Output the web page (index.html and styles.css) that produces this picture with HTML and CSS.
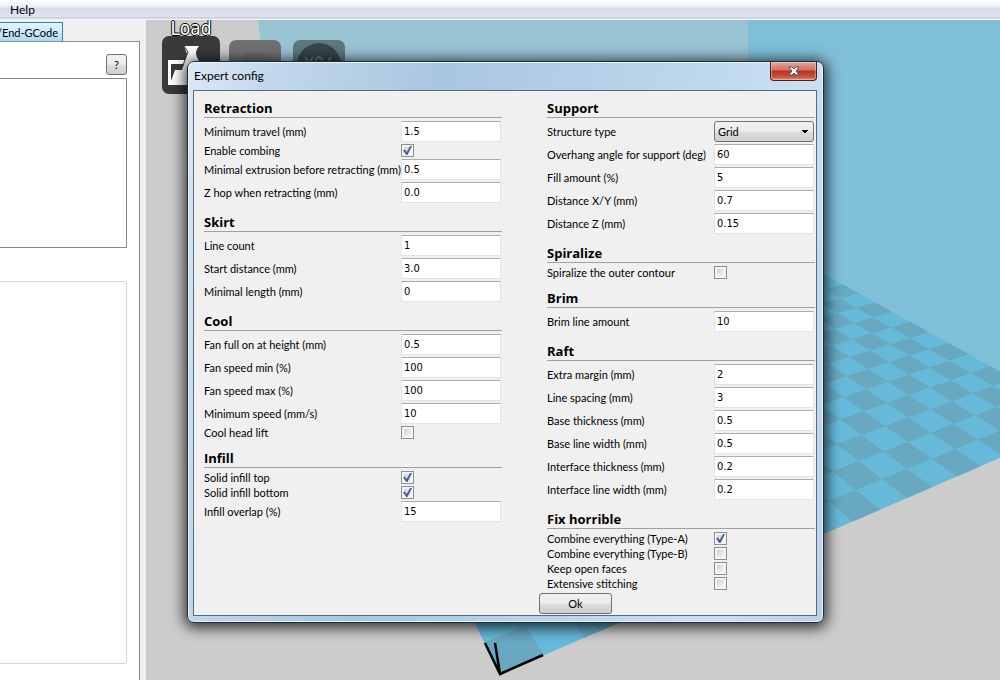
FILE: index.html
```html
<!DOCTYPE html>
<html lang="en">
<head>
<meta charset="utf-8">
<meta name="viewport" content="width=device-width, initial-scale=1">
<title>Expert config</title>
<link rel="stylesheet" href="styles.css">
</head>
<body>
<div class="app">
  <nav class="menubar"><button type="button" class="menu-item">Help</button></nav>
  <div class="workspace">
    <aside class="sidebar">
      <div class="tabs"><button type="button" class="tab">t/End-GCode</button></div>
      <div class="tab-page">
        <div class="tab-tools"><button type="button" class="help">?</button></div>
        <div class="list"></div>
        <div class="group"></div>
      </div>
    </aside>
    <main class="viewport">
      <svg class="scene" viewBox="146 20 854 660" preserveAspectRatio="xMinYMin slice" aria-hidden="true">
        <rect x="146" y="20" width="854" height="660" fill="#cccccc"/>
        <path d="M258 20H748V240L480 120L268 110Z" fill="#99c3d3"/>
        <path d="M748 20H1000V380L748 240Z" fill="#80bfd8"/>
        <g id="bed"></g>
        <path d="M485 643L500 674L543 655M495 643L500 674" fill="none" stroke="#000" stroke-width="2.5"/>
      </svg>
      <div class="toolbar">
        <button type="button" class="tool tool-load"><span class="tool-label">Load</span>
          <svg viewBox="0 0 58 58" aria-hidden="true"><rect width="58" height="58" rx="7" fill="#3a3a3a"/><path d="M6 24H25V34H54V49H6Z" fill="#fff"/><path d="M9 45V28H25L22 34H13Z" fill="#3a3a3a"/><path d="M22 10H37C33 16 33 18 37 25H52V34H20L25 18Z" fill="#fff"/><path d="M22 10L26 16L20 32" fill="none" stroke="#3a3a3a" stroke-width="1"/></svg>
        </button>
        <button type="button" class="tool tool-dim" aria-label="Save"><svg viewBox="0 0 52 52" aria-hidden="true"><rect width="52" height="52" rx="7" fill="#707272"/><path d="M12 11H38V30H12Z" fill="#6e6c6c" stroke="#7c7878" stroke-width="1"/></svg></button>
        <button type="button" class="tool tool-dim" aria-label="View"><svg viewBox="0 0 52 52" aria-hidden="true"><rect width="52" height="52" rx="7" fill="#5c7980"/><circle cx="26" cy="25" r="22" fill="#35474d"/><path d="M12 17L17 24M20 17L15 24M23 22V19L26 17L29 19V22M38 17L34 23" fill="none" stroke="#5c7980" stroke-width="2"/></svg></button>
      </div>
    </main>
  </div>
</div>

<section class="dialog" role="dialog" aria-labelledby="dialog-title">
  <header class="titlebar">
    <h1 id="dialog-title">Expert config</h1>
    <button type="button" class="close" aria-label="Close"><svg viewBox="0 0 14 12" aria-hidden="true"><path d="M2 2H5L7 4L9 2H12L9 6L12 10H9L7 8L5 10H2L5 6Z" fill="#fff" stroke="#4d5560" stroke-width="1"/></svg></button>
  </header>
  <form class="panel">
    <div class="columns">
      <div class="column">
        <fieldset><legend>Retraction</legend>
          <div class="row"><label for="f1">Minimum travel (mm)</label><input type="text" id="f1" value="1.5"></div>
          <div class="row check"><label for="f2">Enable combing</label><input type="checkbox" id="f2" checked></div>
          <div class="row"><label for="f3">Minimal extrusion before retracting (mm)</label><input type="text" id="f3" value="0.5"></div>
          <div class="row"><label for="f4">Z hop when retracting (mm)</label><input type="text" id="f4" value="0.0"></div>
        </fieldset>
        <fieldset><legend>Skirt</legend>
          <div class="row"><label for="f5">Line count</label><input type="text" id="f5" value="1"></div>
          <div class="row"><label for="f6">Start distance (mm)</label><input type="text" id="f6" value="3.0"></div>
          <div class="row"><label for="f7">Minimal length (mm)</label><input type="text" id="f7" value="0"></div>
        </fieldset>
        <fieldset><legend>Cool</legend>
          <div class="row"><label for="f8">Fan full on at height (mm)</label><input type="text" id="f8" value="0.5"></div>
          <div class="row"><label for="f9">Fan speed min (%)</label><input type="text" id="f9" value="100"></div>
          <div class="row"><label for="f10">Fan speed max (%)</label><input type="text" id="f10" value="100"></div>
          <div class="row"><label for="f11">Minimum speed (mm/s)</label><input type="text" id="f11" value="10"></div>
          <div class="row check"><label for="f12">Cool head lift</label><input type="checkbox" id="f12"></div>
        </fieldset>
        <fieldset><legend>Infill</legend>
          <div class="row check"><label for="f13">Solid infill top</label><input type="checkbox" id="f13" checked></div>
          <div class="row check"><label for="f14">Solid infill bottom</label><input type="checkbox" id="f14" checked></div>
          <div class="row"><label for="f15">Infill overlap (%)</label><input type="text" id="f15" value="15"></div>
        </fieldset>
      </div>
      <div class="column">
        <fieldset><legend>Support</legend>
          <div class="row"><label for="g1">Structure type</label><select id="g1"><option>Grid</option></select></div>
          <div class="row"><label for="g2">Overhang angle for support (deg)</label><input type="text" id="g2" value="60"></div>
          <div class="row"><label for="g3">Fill amount (%)</label><input type="text" id="g3" value="5"></div>
          <div class="row"><label for="g4">Distance X/Y (mm)</label><input type="text" id="g4" value="0.7"></div>
          <div class="row"><label for="g5">Distance Z (mm)</label><input type="text" id="g5" value="0.15"></div>
        </fieldset>
        <fieldset><legend>Spiralize</legend>
          <div class="row check"><label for="g6">Spiralize the outer contour</label><input type="checkbox" id="g6"></div>
        </fieldset>
        <fieldset><legend>Brim</legend>
          <div class="row"><label for="g7">Brim line amount</label><input type="text" id="g7" value="10"></div>
        </fieldset>
        <fieldset><legend>Raft</legend>
          <div class="row"><label for="g8">Extra margin (mm)</label><input type="text" id="g8" value="2"></div>
          <div class="row"><label for="g9">Line spacing (mm)</label><input type="text" id="g9" value="3"></div>
          <div class="row"><label for="g10">Base thickness (mm)</label><input type="text" id="g10" value="0.5"></div>
          <div class="row"><label for="g11">Base line width (mm)</label><input type="text" id="g11" value="0.5"></div>
          <div class="row"><label for="g12">Interface thickness (mm)</label><input type="text" id="g12" value="0.2"></div>
          <div class="row"><label for="g13">Interface line width (mm)</label><input type="text" id="g13" value="0.2"></div>
        </fieldset>
        <fieldset><legend>Fix horrible</legend>
          <div class="row check"><label for="g14">Combine everything (Type-A)</label><input type="checkbox" id="g14" checked></div>
          <div class="row check"><label for="g15">Combine everything (Type-B)</label><input type="checkbox" id="g15"></div>
          <div class="row check"><label for="g16">Keep open faces</label><input type="checkbox" id="g16"></div>
          <div class="row check"><label for="g17">Extensive stitching</label><input type="checkbox" id="g17"></div>
        </fieldset>
      </div>
    </div>
    <footer class="actions"><button type="button" class="ok">Ok</button></footer>
  </form>
</section>
<script src="bed.js"></script>
</body>
</html>
```
FILE: styles.css
```css
* { box-sizing: border-box; }
body {
  margin: 0;
  font: 11px/15px Lato, "Liberation Sans", sans-serif;
  color: #000;
  background: #f0f0f0;
}
button, input, select { font: inherit; color: inherit; margin: 0; }
.app { display: flex; flex-direction: column; height: 100vh; min-height: 640px; overflow: hidden; }
.menubar {
  flex: none;
  height: 20px;
  background: linear-gradient(#fff 0, #e9ecf5 7px, #d6dcec 8px, #e0e3f3 17px, #b6bccc 18px, #f6f6f6 19px);
}
.menu-item { border: 0; background: none; padding: 2px 10px; font-size: 12px; }
.workspace { flex: 1; display: grid; grid-template-columns: 146px 1fr; min-height: 0; }
.sidebar { display: flex; flex-direction: column; padding-right: 6px; background: #f0f0f0; }
.tabs { display: flex; height: 21px; padding-top: 2px; }
.tab {
  width: 63px;
  padding: 0 4px 0 0;
  border: 1px solid #3c7fb1;
  border-width: 1px 1px 0 0;
  background: linear-gradient(#e3f4fc, #cdeafa 50%, #a8daf3);
  display: flex;
  align-items: center;
  justify-content: flex-end;
  white-space: nowrap;
  overflow: hidden;
}
.tab-page {
  flex: 1;
  display: flex;
  flex-direction: column;
  padding: 12px 12px 16px 0;
  border: 1px solid #898c95;
  border-width: 1px 1px 0 0;
  background: #fff;
}
.tab-tools { display: flex; justify-content: flex-end; height: 24px; }
.help {
  width: 21px;
  height: 21px;
  padding: 0;
  border: 1px solid #707070;
  border-radius: 3px;
  background: linear-gradient(#f2f2f2, #ebebeb 50%, #ddd 51%, #cfcfcf);
}
.list { height: 170px; border: 1px solid #828790; border-width: 1px 1px 1px 0; }
.group { flex: 1; margin-top: 33px; border: 1px solid #d5d7d9; border-left: 0; border-radius: 0 3px 3px 0; }
.viewport { display: grid; min-width: 0; overflow: hidden; background: #ccc; }
.scene, .toolbar { grid-area: 1 / 1; }
.scene { width: 100%; height: 100%; }
.toolbar { display: flex; align-items: flex-start; gap: 12px; padding-left: 16px; z-index: 1; }
.tool { flex: none; border: 0; padding: 0; background: none; display: block; }
.tool svg { display: block; width: 100%; }
.tool-load { width: 58px; }
.tool-load + .tool-dim { margin-left: -3px; }
.tool-dim { width: 52px; padding-top: 20px; }
.tool-label {
  display: block;
  height: 16px;
  font: 19px/16px "DejaVu Sans Condensed", "DejaVu Sans", sans-serif;
  color: #fff;
  text-shadow: 1px 0 #000, -1px 0 #000, 0 1px #000, 0 -1px #000;
}
.dialog {
  position: absolute;
  left: 187px;
  top: 61px;
  width: 637px;
  padding: 0 6px 6px 5px;
  border: 1px solid #1d2b3a;
  border-radius: 7px;
  background: linear-gradient(100deg, #dbe8f5 0, #c2d7ec 12%, #a9c6e0 35%, #b8d2ea 60%, #c9dff3 85%, #b9d0e6);
  box-shadow: inset 0 0 0 1px #e8f3fb, 0 2px 14px 3px rgba(0, 0, 0, .75);
  z-index: 2;
}
.titlebar { display: flex; align-items: flex-start; justify-content: space-between; height: 28px; }
.titlebar h1 { margin: 0; padding: 6px 1px; font-size: 12px; line-height: 16px; font-weight: 400; }
.close {
  width: 47px;
  height: 19px;
  padding: 0;
  border: 1px solid #4b1f22;
  border-top: 0;
  border-radius: 0 0 4px 4px;
  background: linear-gradient(#e3a598, #d3705f 45%, #b92f20 50%, #c8503a 80%, #e08a6a);
  box-shadow: inset 0 0 0 1px rgba(255, 255, 255, .35);
  display: grid;
  place-items: center;
}
.close svg { width: 14px; height: 12px; }
.panel { border: 1px solid #566b82; background: #f0f0f0; padding: 7px 1px 1px 10px; }
.columns { display: grid; grid-template-columns: minmax(0, 298fr) minmax(0, 268fr); gap: 45px; }
fieldset { display: block; min-width: 0; margin: 0 0 8px; padding: 0; border: 0; }
fieldset:last-child { margin-bottom: 0; }
legend {
  display: block;
  width: 100%;
  height: 20px;
  margin-bottom: 2px;
  padding: 0;
  border-bottom: 1px solid #a0a0a0;
  font: 700 13px/20px "Open Sans", "Noto Sans", sans-serif;
}
.row { display: grid; grid-template-columns: minmax(0, 1fr) 101px; align-items: center; height: 23px; }
.row.check { height: 15px; }
.row label { white-space: nowrap; }
.row input[type="text"] {
  width: 100px;
  height: 21px;
  padding: 0 2px;
  border: 1px solid #e2e3ea;
  border-top-color: #abadb3;
  border-radius: 1px;
  background: #fff;
  font-family: "DejaVu Sans Condensed", "DejaVu Sans", sans-serif;
}
.row select {
  appearance: none;
  width: 100px;
  height: 21px;
  padding: 0 3px;
  border: 1px solid #707070;
  border-radius: 3px;
  background:
    linear-gradient(to top right, transparent 50%, #000 50%) 86px 8px / 4px 4px no-repeat,
    linear-gradient(to top left, transparent 50%, #000 50%) 90px 8px / 4px 4px no-repeat,
    linear-gradient(#f2f2f2, #ebebeb 50%, #ddd 51%, #cfcfcf);
}
.row input[type="checkbox"] {
  appearance: none;
  width: 13px;
  height: 13px;
  border: 1px solid #8e8f8f;
  background: linear-gradient(135deg, #cfd2d6, #f6f6f6) center / 7px 7px no-repeat, #f4f4f4;
  display: grid;
  place-items: center;
}
.row input[type="checkbox"]:checked::before {
  content: "";
  width: 9px;
  height: 9px;
  background: #4a5f97;
  clip-path: polygon(0 48%, 22% 38%, 40% 66%, 78% 0, 100% 0, 50% 100%, 36% 100%);
}
.actions { display: flex; padding: 2px 0 0 335px; }
.ok {
  width: 73px;
  height: 21px;
  padding: 0;
  border: 1px solid #707070;
  border-radius: 3px;
  background: linear-gradient(#f2f2f2, #ebebeb 50%, #ddd 51%, #cfcfcf);
}
```
FILE: bed.js
```js
// Perspective checkerboard of the print bed. Each anchor is [row, column, x, y].
const anchors = [
  [1, -13, 500, 674], [0, -13, 485, 643], [1, -12, 543, 655],
  [1, 0, 932, 488], [0, 0, 907, 469], [1, 2, 980, 465],
  [-3, 3, 909, 395], [-7, 7, 909, 321], [-11, 7, 843, 285],
  [-3, 7, 991, 367], [-2, -1, 838, 444]
];

// Least-squares fit of the eight coefficients of the projection.
function fit(points) {
  const rows = [];
  for (const [u, v, px, py] of points) {
    const x = px / 1000, y = py / 1000, a = u / 10, b = v / 10;
    rows.push([a, b, 1, 0, 0, 0, -a * x, -b * x, x]);
    rows.push([0, 0, 0, a, b, 1, -a * y, -b * y, y]);
  }
  const m = [];
  for (let i = 0; i < 8; i++) {
    m.push([]);
    for (let j = 0; j < 9; j++) m[i].push(rows.reduce((s, r) => s + r[i] * r[j], 0));
  }
  for (let i = 0; i < 8; i++) {
    let p = i;
    for (let k = i + 1; k < 8; k++) if (Math.abs(m[k][i]) > Math.abs(m[p][i])) p = k;
    [m[i], m[p]] = [m[p], m[i]];
    for (let k = 0; k < 8; k++) {
      if (k === i) continue;
      const f = m[k][i] / m[i][i];
      for (let j = i; j < 9; j++) m[k][j] -= f * m[i][j];
    }
  }
  return m.map((r, i) => r[8] / r[i]);
}

const h = fit(anchors);
function project(u, v) {
  const a = u / 10, b = v / 10, w = h[6] * a + h[7] * b + 1;
  const x = 1000 * (h[0] * a + h[1] * b + h[2]) / w;
  const y = 1000 * (h[3] * a + h[4] * b + h[5]) / w;
  return x.toFixed(1) + "," + y.toFixed(1);
}

const bed = document.getElementById("bed");
function quad(u0, v0, u1, v1, fill) {
  const p = document.createElementNS("http://www.w3.org/2000/svg", "polygon");
  p.setAttribute("points", [project(u0, v0), project(u1, v0), project(u1, v1), project(u0, v1)].join(" "));
  p.setAttribute("fill", fill);
  bed.appendChild(p);
}
quad(-18, -13, 1, 7, "#67b9da");
for (let u = -18; u < 1; u++) {
  for (let v = -13; v < 7; v++) {
    if ((u + v) % 2 !== 0) quad(u, v, u + 1, v + 1, "#68a8c0");
  }
}
```
